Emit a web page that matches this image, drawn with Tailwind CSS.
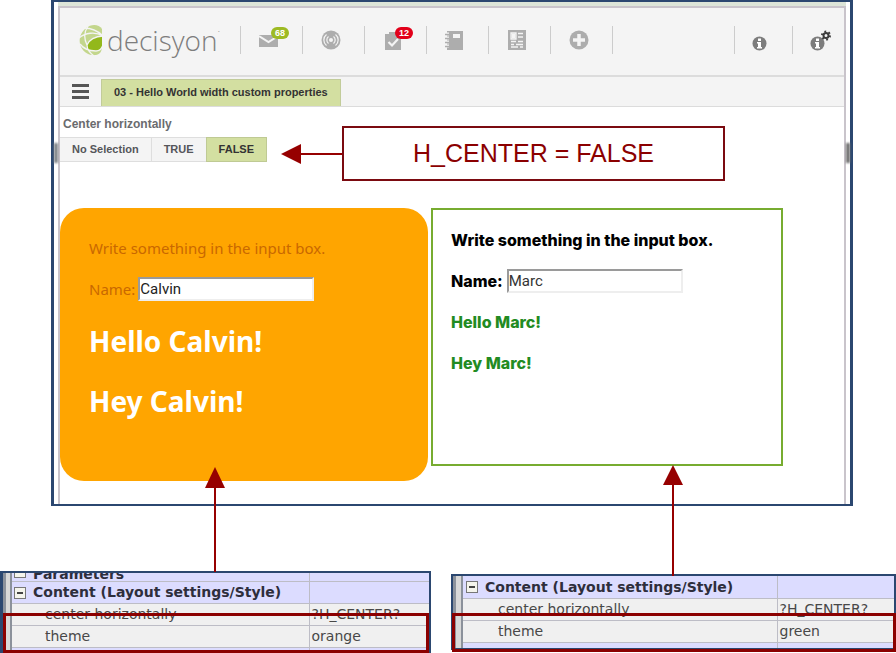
<!DOCTYPE html>
<html lang="en">
<head>
<meta charset="utf-8">
<title>Decisyon - Hello World</title>
<script src="https://cdn.jsdelivr.net/npm/@tailwindcss/browser@4"></script>
</head>
<body class="bg-white font-['Liberation_Sans',Arial,sans-serif] overflow-hidden">
<div class="relative">
  <!-- Application window -->
  <main class="ml-[51px] mr-[43px] border-x-3 border-y-2 border-[#2b4770] bg-white px-1 relative">
    <div class="absolute left-0 top-[141px] w-1 h-5 bg-[#808488] blur-[1px]"></div>
    <div class="absolute right-0 top-[141px] w-1 h-5 bg-[#707070] blur-[1px]"></div>
    <div class="h-1 bg-[#dde5d8]"></div>
    <div class="border-x-2 border-t-2 border-[#c9c4cb]">
      <header class="bg-[#f4f4f4] border-b-2 border-[#dcdcdc] h-[69px] flex items-start pt-[18px]">
        <a href="#" aria-label="decisyon home" class="flex items-center pl-[19px] w-[180px] h-7">
          <svg class="w-6 h-8 shrink-0" viewBox="0 0 24 32">
            <path d="M23 5C20 0 12 0 7 4C1 9 0 15 1 20C3 28 10 32 17 31C22 30 23 26 23 22Z" fill="#c3d68c"/>
            <path d="M23 12V21C23 25 20 27 15 27C10 27 7 24 8 21C10 16 16 12 23 12Z" fill="#93b81b"/>
            <path d="M5 4C12 4 19 7 24 12M0 14C6 9 16 7 24 12M9 2C5 8 5 15 8 21M1 20C4 24 10 27 17 27C21 27 23 24 24 21M24 12C16 12 10 16 8 21C8 25 11 29 15 32" fill="none" stroke="#f4f4f4" stroke-width="1.300"/>
          </svg>
          <span class="pl-1 text-[28px] leading-7 font-light text-[#7d7d7d] font-['Open_Sans',sans-serif]">decisyon</span><span class="text-[8px] text-[#858585] self-start">·</span>
        </a>
        <nav aria-label="Tools" class="flex h-7 text-[#adadad]">
          <button aria-label="Messages" class="relative w-[62px] border-l border-[#cccccc] flex items-center pl-[18px]">
            <svg class="w-[19px] h-7" viewBox="0 0 19 28"><path d="M0 9H19V21H0Z" fill="currentColor"/><path d="M0 10L9.500 16L19 10" fill="none" stroke="#f4f4f4" stroke-width="2"/></svg>
            <span class="absolute left-[30px] top-[1px] h-3 w-[18px] rounded-full bg-[#9dba23] text-white text-[9px] leading-3 font-bold text-center">68</span>
          </button>
          <button aria-label="Broadcast" class="w-[62px] border-l border-[#cccccc] flex items-center pl-[18px]">
            <svg class="w-[20px] h-[20px]" viewBox="0 0 20 20"><circle cx="10" cy="10" r="9.500" fill="currentColor"/><circle cx="10" cy="10" r="2" fill="#f4f4f4"/><path d="M7.500 6.500A4.500 4.500 0 0 0 7.500 13.500M12.500 6.500A4.500 4.500 0 0 1 12.500 13.500M5.500 4.500A7 7 0 0 0 5.500 15.500M14.500 4.500A7 7 0 0 1 14.500 15.500" fill="none" stroke="#f4f4f4" stroke-width="1.200"/></svg>
          </button>
          <button aria-label="Tasks" class="relative w-[62px] border-l border-[#cccccc] flex items-center pl-[20px]">
            <svg class="w-[16px] h-7" viewBox="0 0 16 28"><path d="M0 8H4V6H12V8H16V24H0Z" fill="currentColor"/><path d="M3.500 16L7 19.500L13 13" fill="none" stroke="#f4f4f4" stroke-width="2.200"/></svg>
            <span class="absolute left-[30px] top-[1px] h-3 w-[18px] rounded-full bg-[#e2001a] text-white text-[9px] leading-3 font-bold text-center">12</span>
          </button>
          <button aria-label="Notebook" class="w-[62px] border-l border-[#cccccc] flex items-center pl-[18px]">
            <svg class="w-[18px] h-5" viewBox="0 0 18 20"><path d="M2 1H18V20H2Z" fill="currentColor"/><path d="M8 4H15V8H8Z" fill="#f4f4f4"/><path d="M0 4H4M0 8H4M0 12H4M0 16H4" stroke="#f4f4f4" stroke-width="3"/><path d="M0 4.500H4M0 8.500H4M0 12.500H4M0 16.500H4" stroke="currentColor" stroke-width="1.500"/></svg>
          </button>
          <button aria-label="News" class="w-[62px] border-l border-[#cccccc] flex items-center pl-[19px]">
            <svg class="w-[18px] h-5" viewBox="0 0 18 20"><path d="M0 0H18V20H0Z" fill="currentColor"/><path d="M3.500 3.500H7.500V8.500H3.500Z" fill="#f4f4f4"/><path d="M3 3H8V9H3ZM10 3.500H15M10 7H15M3 11.500H8M10 11.500H15M3 14.500H6M8 14.500H15M3 17H10M12 17H15" fill="none" stroke="#f4f4f4" stroke-width="1.300"/></svg>
          </button>
          <button aria-label="Add" class="w-[62px] border-l border-[#cccccc] flex items-center pl-[18px]">
            <svg class="w-5 h-5" viewBox="0 0 20 20"><circle cx="10" cy="10" r="9.500" fill="currentColor"/><path d="M10 4V16M4 10H16" stroke="#f4f4f4" stroke-width="3.500"/></svg>
          </button>
          <span class="border-l border-[#cccccc]"></span>
        </nav>
        <div class="ml-auto flex h-7 text-[#7d7d7d]">
          <button aria-label="Information" class="w-[58px] border-l border-[#cccccc] flex items-end pl-[17px]">
            <svg class="w-[15px] h-[18px]" viewBox="0 0 15 18"><circle cx="7.500" cy="7.500" r="7" fill="currentColor"/><path d="M6 2.500H9V5H6ZM5 6H9V11H10V12.500H5V11H6V7.500H5Z" fill="#fff"/></svg>
          </button>
          <button aria-label="Information settings" class="w-[52px] border-l border-[#cccccc] flex items-end pl-[17px]">
            <svg class="w-[21px] h-[24px]" viewBox="0 0 21 24"><circle cx="7.500" cy="13.500" r="7" fill="currentColor"/><path d="M6 8.500H9V11H6ZM5 12H9V17H10V18.500H5V17H6V13.500H5Z" fill="#fff"/><circle cx="16" cy="5.500" r="2.500" fill="#f4f4f4" stroke="#3c3c3c" stroke-width="2"/><circle cx="16" cy="5.500" r="4" fill="none" stroke="#3c3c3c" stroke-width="2" stroke-dasharray="1.800 2.390"/></svg>
          </button>
        </div>
      </header>

      <div class="h-[30px] bg-[#f4f4f4] border-b border-[#dcdcdc] flex">
        <button aria-label="Menu" class="w-[41px] flex flex-col justify-center items-center gap-[3px]">
          <span class="w-[17px] h-[3px] bg-[#555555]"></span><span class="w-[17px] h-[3px] bg-[#555555]"></span><span class="w-[17px] h-[3px] bg-[#555555]"></span>
        </button>
        <a href="#" class="mt-[2px] px-3 bg-[#d3dfa1] border border-b-0 border-[#c2cc9a] text-[11px] leading-6 font-bold text-[#333333]">03 - Hello World width custom properties</a>
      </div>

      <section class="h-[397px] overflow-hidden">
        <h2 class="pt-2 pl-[3px] text-xs leading-[18px] font-bold text-[#6a6b6e]">Center horizontally</h2>
        <div role="group" aria-label="Center horizontally" class="mt-1 flex h-[25px] text-[11px] font-bold text-[#55565a]">
          <button class="bg-[#f4f4f4] border border-l-0 border-[#dedede] px-3">No Selection</button>
          <button class="bg-[#f4f4f4] border-y border-[#dedede] px-3">TRUE</button>
          <button aria-pressed="true" class="bg-[#d3dfa1] border border-[#bfca94] px-3 text-[#333333]">FALSE</button>
        </div>

        <div class="mt-[46px] flex items-start gap-[3px]">
          <article class="w-[368px] h-[273px] rounded-3xl bg-[#ffa500] pl-[29px] pt-[29px] font-['Comic_Sans_MS','Noto_Sans',sans-serif] text-[#c96800]">
            <p class="text-[15px] leading-[22px]">Write something in the input box.</p>
            <div class="mt-[18px] flex items-center gap-[3px] text-[15px]">
              <label for="calvin">Name:</label>
              <input id="calvin" type="text" value="Calvin" class="w-44 h-6 border-2 border-t-[#9a9a9a] border-l-[#9a9a9a] border-b-[#eeeeee] border-r-[#eeeeee] bg-white text-[#222222] text-[15px] font-[Roboto,sans-serif]">
            </div>
            <h1 class="mt-5 text-[28px] leading-10 font-bold text-white">Hello Calvin!</h1>
            <h1 class="mt-5 text-[28px] leading-10 font-bold text-white">Hey Calvin!</h1>
          </article>
          <article class="w-[352px] h-[258px] border-2 border-[#77ac30] bg-white pl-[18px] pt-[18px] flex flex-col gap-[17px] font-[Inter,sans-serif] text-[16px] leading-6 font-extrabold text-black">
            <p>Write something in the input box.</p>
            <div class="flex items-center gap-1">
              <label for="marc">Name:</label>
              <input id="marc" type="text" value="Marc" class="w-44 h-6 border-2 border-t-[#9a9a9a] border-l-[#9a9a9a] border-b-[#eeeeee] border-r-[#eeeeee] bg-white text-[#333333] text-[15px] font-normal font-[Roboto,sans-serif]">
            </div>
            <p class="text-[#228b22]">Hello Marc!</p>
            <p class="text-[#228b22]">Hey Marc!</p>
          </article>
        </div>
      </section>
    </div>
  </main>

  <!-- Property sheets -->
  <div class="mt-[65px] flex items-start gap-5 text-[14px] text-[#484848] font-[Verdana,'DejaVu_Sans',sans-serif]">
    <section class="relative w-[431px] h-[82px] overflow-hidden border-t-2 border-r-2 border-l-3 border-[#2b4770] flex">
      <div class="w-[9px] shrink-0 bg-[#d8d8d8] border-l-3 border-r-2 border-[#8b919b]"></div>
      <table class="w-full table-fixed border-collapse leading-[21px]">
        <colgroup><col class="w-[297px]"><col></colgroup>
        <tbody>
          <tr class="bg-[#dcdcff] border-b border-[#bdbdc6] font-bold text-[#2e2e3c]"><td class="p-0 border-r border-[#bdbdc6]"><div class="h-2 flex items-end overflow-hidden pl-[2px] gap-[7px]"><span class="w-3 h-3 shrink-0 mb-[3px] border border-[#777777] bg-[#f4f4ec] flex items-center justify-center"><span class="w-[6px] h-[2px] bg-[#444444]"></span></span><span class="leading-[14px]">Parameters</span></div></td><td class="p-0"></td></tr>
          <tr class="bg-[#dcdcff] border-b border-[#bdbdc6] font-bold text-[#2e2e3c]"><td class="p-0 border-r border-[#bdbdc6]"><div class="flex items-center pl-[2px] gap-[7px]"><button aria-label="Collapse" class="w-3 h-3 shrink-0 border border-[#777777] bg-[#f4f4ec] flex items-center justify-center"><span class="w-[6px] h-[2px] bg-[#444444]"></span></button>Content (Layout settings/Style)</div></td><td class="p-0"></td></tr>
          <tr class="bg-[#f0f0f0] border-b border-[#bdbdc6]"><td class="p-0 pl-[33px] border-r border-[#bdbdc6]">center horizontally</td><td class="p-0 pl-[2px]">?H_CENTER?</td></tr>
          <tr class="bg-[#f0f0f0] border-b border-[#bdbdc6]"><td class="p-0 pl-[33px] border-r border-[#bdbdc6]">theme</td><td class="p-0 pl-[2px]">orange</td></tr>
          <tr class="bg-[#dcdcff]"><td class="p-0 h-2 border-r border-[#bdbdc6]"></td><td class="p-0"></td></tr>
        </tbody>
      </table>
      <div class="absolute left-0 right-0 top-[40px] bottom-0 border-3 border-[#8b0000]"></div>
    </section>

    <section class="relative mt-[3px] flex-1 h-[78px]">
      <div class="h-[76px] overflow-hidden border-2 border-[#2b4770] flex">
        <div class="w-[10px] shrink-0 bg-[#d8d8d8] border-l-3 border-r-2 border-[#8b919b]"></div>
        <table class="w-full table-fixed border-collapse leading-[22px]">
          <colgroup><col class="w-[314px]"><col></colgroup>
          <tbody>
            <tr class="bg-[#dcdcff] border-b border-[#bdbdc6] font-bold text-[#2e2e3c]"><td class="p-0 border-r border-[#bdbdc6]"><div class="flex items-center pl-[3px] gap-[7px]"><button aria-label="Collapse" class="w-3 h-3 shrink-0 border border-[#777777] bg-[#f4f4ec] flex items-center justify-center"><span class="w-[6px] h-[2px] bg-[#444444]"></span></button>Content (Layout settings/Style)</div></td><td class="p-0"></td></tr>
            <tr class="bg-[#f0f0f0] border-b border-[#bdbdc6] leading-[21px]"><td class="p-0 pl-[35px] border-r border-[#bdbdc6]">center horizontally</td><td class="p-0 pl-[2px]">?H_CENTER?</td></tr>
            <tr class="bg-[#f0f0f0] border-b border-[#bdbdc6] leading-[21px]"><td class="p-0 pl-[35px] border-r border-[#bdbdc6]">theme</td><td class="p-0 pl-[2px]">green</td></tr>
            <tr class="bg-[#dcdcff]"><td class="p-0 h-2 border-r border-[#bdbdc6]"></td><td class="p-0"></td></tr>
          </tbody>
        </table>
      </div>
      <div class="absolute left-px right-0 top-[39px] bottom-0 border-3 border-[#8b0000]"></div>
    </section>
  </div>

  <!-- Annotations -->
  <div class="absolute left-[281px] top-[126px] flex items-center text-[#8b0000]">
    <svg class="w-[61px] h-5" viewBox="0 0 61 20"><path d="M0 10L20 0V20Z" fill="#960000"/><path d="M20 10H61" stroke="#960000" stroke-width="2"/></svg>
    <div class="w-[383px] h-[55px] border-2 border-[#7b0a10] bg-white flex items-center justify-center text-[25px]">H_CENTER = FALSE</div>
  </div>
  <svg class="absolute left-[205px] top-[467px] w-5 h-[105px]" viewBox="0 0 20 105"><path d="M10 0L20 21H0Z" fill="#960000"/><path d="M10 20V105" stroke="#960000" stroke-width="2"/></svg>
  <svg class="absolute left-[663px] top-[465px] w-5 h-[111px]" viewBox="0 0 20 111"><path d="M10 0L20 20H0Z" fill="#960000"/><path d="M10 19V111" stroke="#960000" stroke-width="2"/></svg>
</div>
</body>
</html>
